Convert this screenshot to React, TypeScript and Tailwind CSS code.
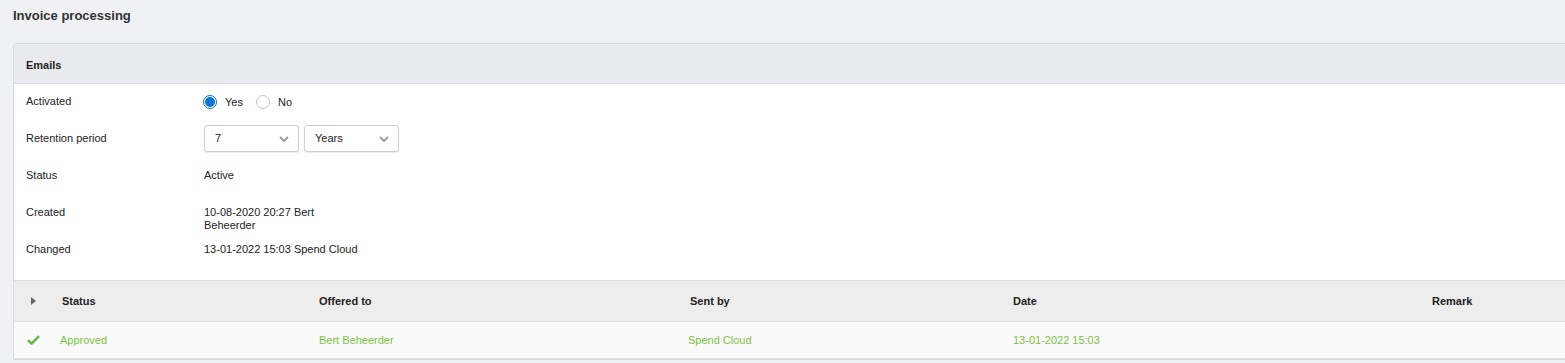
import React from "react";

const font = { fontFamily: '"Liberation Sans", Arial, sans-serif' };

const Chevron = () => (
  <svg width="10" height="6" viewBox="0 0 10 6" className="text-[#999]">
    <path d="M1 1l4 4 4-4" fill="none" stroke="currentColor" strokeWidth="1.8" />
  </svg>
);

const Select = ({ value }: { value: string }) => (
  <div className="flex h-[27px] w-[95px] items-center justify-between rounded-[3px] border border-[#cfcfcf] bg-white pl-[10px] pr-[9px] text-[11px] text-[#222] shadow-[0_1px_1px_rgba(0,0,0,0.08)]">
    <span>{value}</span>
    <Chevron />
  </div>
);

const Radio = ({ checked, label }: { checked?: boolean; label: string }) => (
  <div className="flex items-center">
    {checked ? (
      <span className="flex h-[14px] w-[14px] items-center justify-center rounded-full border border-[#0a74d0] bg-white">
        <span className="h-[10px] w-[10px] rounded-full bg-[#0a74d0]" />
      </span>
    ) : (
      <span className="h-[14px] w-[14px] rounded-full border border-[#c4c4c4] bg-white" />
    )}
    <span className="ml-[8px]">{label}</span>
  </div>
);

const rows: { label: string; value: React.ReactNode }[] = [
  {
    label: "Activated",
    value: (
      <div className="-ml-[1px] flex items-center gap-[13px]">
        <Radio checked label="Yes" />
        <Radio label="No" />
      </div>
    ),
  },
  {
    label: "Retention period",
    value: (
      <div className="flex gap-[5px]">
        <Select value="7" />
        <Select value="Years" />
      </div>
    ),
  },
  { label: "Status", value: "Active" },
  {
    label: "Created",
    value: (
      <span className="leading-[12px]">
        10-08-2020 20:27 Bert
        <br />
        Beheerder
      </span>
    ),
  },
  { label: "Changed", value: "13-01-2022 15:03 Spend Cloud" },
];

export default function App() {
  return (
    <div className="h-[363px] overflow-hidden bg-[#f0f1f5] text-[#333]" style={font}>
      <h1 className="px-[13px] pt-[8px] text-[13px] font-bold leading-[16px] text-[#333]">
        Invoice processing
      </h1>
      <div className="mt-[19px] pl-[13px]">
        <div className="w-[1580px] overflow-hidden rounded-tl-[4px] border border-[#d8d9dd] bg-white">
          <div className="flex h-[40px] items-center border-b border-[#dcdde1] bg-[#e9eaee] px-[12px] pt-[4px] text-[11px] font-bold text-[#222]">
            Emails
          </div>
          <div className="pb-[8px] pt-[3px] text-[11px]">
            {rows.map((r) => (
              <div key={r.label} className="flex min-h-[37px] items-start px-[12px] pt-[8px]">
                <div className="w-[178px] shrink-0 leading-[13px] text-[#222]">{r.label}</div>
                <div
                  className={
                    r.label === "Retention period" ? "-mt-[7px] text-[#222]" : "leading-[13px] text-[#222]"
                  }
                >
                  {r.value}
                </div>
              </div>
            ))}
          </div>
          <div className="grid h-[41px] grid-cols-[48px_257px_371px_323px_419px_1fr] items-center border-t border-[#dcdcdc] bg-[#ededed] text-[11px] font-bold text-[#222]">
            <div className="pl-[17px]">
              <svg width="5" height="8" viewBox="0 0 5 8">
                <path d="M0 0l5 4-5 4z" fill="#666" />
              </svg>
            </div>
            <div>Status</div>
            <div>Offered to</div>
            <div>Sent by</div>
            <div>Date</div>
            <div>Remark</div>
          </div>
          <div className="grid h-[38px] grid-cols-[46px_259px_369px_325px_420px_1fr] items-center border-y border-[#e0e0e0] bg-[#fafafa] text-[11px] text-[#7cc242]">
            <div className="pl-[13px]">
              <svg width="13" height="10" viewBox="0 0 13 10">
                <path d="M1 5.2l3.6 3.4L12 1.2" fill="none" stroke="#66bb44" strokeWidth="2.6" strokeLinejoin="round" />
              </svg>
            </div>
            <div>Approved</div>
            <div>Bert Beheerder</div>
            <div>Spend Cloud</div>
            <div>13-01-2022 15:03</div>
            <div />
          </div>
        </div>
      </div>
    </div>
  );
}
